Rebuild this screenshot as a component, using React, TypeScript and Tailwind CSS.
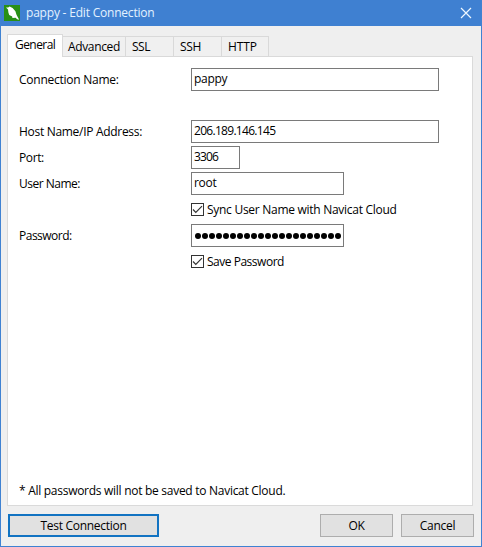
import type { ReactNode } from "react";

const tabs = [
  { label: "Advanced", cls: "w-[63px] pl-[5px]", text: "tracking-[-0.35px]" },
  { label: "SSL", cls: "w-12 pl-[6px]", text: "tracking-[-0.5px]" },
  { label: "SSH", cls: "w-12 pl-[6px]", text: "tracking-[-0.3px]" },
  { label: "HTTP", cls: "w-[47px] pl-[6px]", text: "tracking-[-0.1px]" },
];

function Row({ label, text = "", children }: { label?: string; text?: string; children?: ReactNode }) {
  return (
    <div className="flex h-[26px] items-start">
      <div className={`w-[172px] shrink-0 pt-[2px] leading-5 ${text}`}>{label}</div>
      {children}
    </div>
  );
}

function Field({ value, width, text = "" }: { value: string; width: string; text?: string }) {
  return (
    <div className={`h-[23px] border border-[#7a7a7a] bg-white pl-[2px] leading-5 ${width}`}>
      <span className={text}>{value}</span>
    </div>
  );
}

function Check({ label, text }: { label: string; text: string }) {
  return (
    <div className="flex items-start">
      <div className="mt-[5px] size-[13px] border border-[#333] bg-white">
        <svg viewBox="0 0 11 11" className="block size-[11px]" fill="none" stroke="#333" strokeWidth="1.2">
          <path d="M1 5.5 3.8 8.3 10 2.1" />
        </svg>
      </div>
      <span className={`ml-[3px] mt-[2px] leading-5 ${text}`}>{label}</span>
    </div>
  );
}

export default function App() {
  return (
    <div className="flex h-[547px] w-[482px] flex-col whitespace-nowrap border border-t-0 border-[#3f82d2] bg-[#efefef] font-['Open_Sans','Noto_Sans',sans-serif] text-[12px] text-black">
      <header className="flex h-[26px] shrink-0 items-center bg-[#3f80d1] text-[#e4f2ff]">
        <svg viewBox="0 0 16 16" className="ml-[3px] size-4">
          <rect width="16" height="16" fill="#299016" />
          <path d="M2 2.6 4.2 2.4 5.6 1.4 8.6 3 11.4 6.2 12.6 10 15.2 14.8 13.2 14.2 11.6 12.8 8.4 13 8.2 11.4 5.2 9.9 4.4 7.4 4 4.6Z" fill="#fff" />
        </svg>
        <span className="ml-[6px] tracking-[-0.2px]">pappy - Edit Connection</span>
        <svg viewBox="0 0 12 12" className="ml-auto mr-[9px] size-3" fill="none" stroke="#eef7ff" strokeWidth="1.2">
          <path d="M1 1 11 11M11 1 1 11" />
        </svg>
      </header>

      <nav className="z-10 -mb-px ml-[6px] mt-2 flex h-[23px] items-end leading-5">
        <div className="h-[23px] w-[56px] border border-b-0 border-[#dadada] bg-white pl-[7px] tracking-[-0.55px]">General</div>
        {tabs.map((t) => (
          <div key={t.label} className={`h-[21px] border border-l-0 border-[#d9d9d9] bg-[#f0f0f0] ${t.cls} ${t.text}`}>
            {t.label}
          </div>
        ))}
      </nav>

      <main className="ml-[6px] flex h-[450px] w-[466px] shrink-0 flex-col border border-[#dadada] bg-white pl-[11px] pt-[11px]">
        <Row label="Connection Name:" text="tracking-[-0.25px]">
          <Field value="pappy" width="w-[248px]" text="tracking-[-0.3px]" />
        </Row>
        <Row />
        <Row label="Host Name/IP Address:" text="tracking-[-0.3px]">
          <Field value="206.189.146.145" width="w-[248px]" text="tracking-[-0.7px]" />
        </Row>
        <Row label="Port:" text="tracking-[-0.4px]">
          <Field value="3306" width="w-[49px]" text="tracking-[-0.9px]" />
        </Row>
        <Row label="User Name:" text="tracking-[-0.5px]">
          <Field value="root" width="w-[153px]" text="tracking-[-0.3px]" />
        </Row>
        <Row>
          <Check label="Sync User Name with Navicat Cloud" text="tracking-[-0.28px]" />
        </Row>
        <Row label="Password:" text="tracking-[-0.5px]">
          <div className="flex h-[23px] w-[153px] items-center gap-px border border-[#7a7a7a] pl-[3px]">
            {Array.from({ length: 21 }, (_, i) => (
              <span key={i} className="size-[6px] shrink-0 rounded-full bg-black" />
            ))}
          </div>
        </Row>
        <Row>
          <Check label="Save Password" text="tracking-[-0.48px]" />
        </Row>
        <p className="mb-[4px] mt-auto leading-5 tracking-[-0.28px]">* All passwords will not be saved to Navicat Cloud.</p>
      </main>

      <footer className="ml-[7px] mt-2 flex h-[23px] leading-[21px]">
        <button className="w-[151px] border-2 border-[#1273c2] bg-[#e1e1e1] text-center leading-[19px] tracking-[-0.28px]">Test Connection</button>
        <button className="ml-[161px] w-[73px] border border-[#adadad] bg-[#e1e1e1] text-center tracking-[-0.3px]">OK</button>
        <button className="ml-2 w-[73px] border border-[#adadad] bg-[#e1e1e1] text-center tracking-[-0.3px]">Cancel</button>
      </footer>
    </div>
  );
}
